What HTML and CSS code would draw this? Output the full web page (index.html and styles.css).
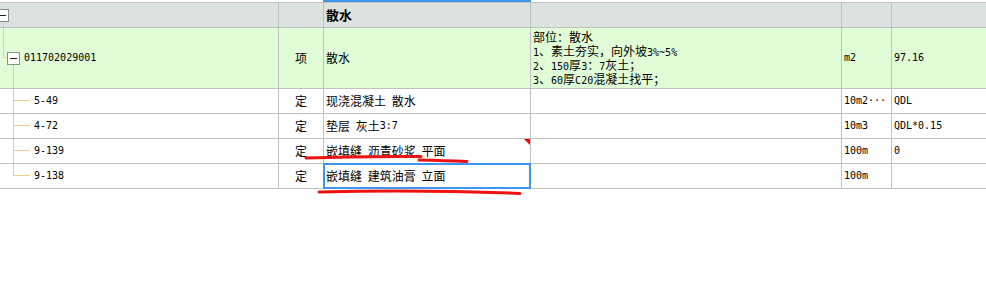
FILE: index.html
```html
<!DOCTYPE html>
<html lang="zh-CN">
<head>
<meta charset="utf-8">
<title>散水</title>
<link rel="stylesheet" href="styles.css">
</head>
<body>
<div class="grid">
  <div class="row head">
    <div class="cell tree t-head"><span class="toggle off-left"></span></div>
    <div class="cell"></div>
    <div class="cell name hdr">散水</div>
    <div class="cell"></div>
    <div class="cell"></div>
    <div class="cell"></div>
  </div>
  <div class="row bill">
    <div class="cell tree t-bill"><span class="toggle"></span><span class="a">011702029001</span></div>
    <div class="cell type">项</div>
    <div class="cell name">散水</div>
    <div class="cell desc">
      <div class="ln">部位：散水</div>
      <div class="ln"><span class="a">1</span>、素土夯实，向外坡<span class="a">3%~5%</span></div>
      <div class="ln"><span class="a">2</span>、<span class="a">150</span>厚<span class="a">3</span>：<span class="a">7</span>灰土；</div>
      <div class="ln"><span class="a">3</span>、<span class="a">60</span>厚<span class="a">C20</span>混凝土找平；</div>
    </div>
    <div class="cell unit"><span class="a">m2</span></div>
    <div class="cell qty"><span class="a">97.16</span></div>
  </div>
  <div class="row kid">
    <div class="cell tree t-kid"><span class="a">5-49</span></div>
    <div class="cell type">定</div>
    <div class="cell name">现浇混凝土 散水</div>
    <div class="cell"></div>
    <div class="cell unit"><span class="a">10m2···</span></div>
    <div class="cell qty"><span class="a">QDL</span></div>
  </div>
  <div class="row kid">
    <div class="cell tree t-kid"><span class="a">4-72</span></div>
    <div class="cell type">定</div>
    <div class="cell name">垫层 灰土<span class="a">3:7</span></div>
    <div class="cell"></div>
    <div class="cell unit"><span class="a">10m3</span></div>
    <div class="cell qty"><span class="a">QDL*0.15</span></div>
  </div>
  <div class="row kid">
    <div class="cell tree t-kid"><span class="a">9-139</span></div>
    <div class="cell type">定</div>
    <div class="cell name flag">嵌填缝 沥青砂浆 平面</div>
    <div class="cell"></div>
    <div class="cell unit"><span class="a">100m</span></div>
    <div class="cell qty"><span class="a">0</span></div>
  </div>
  <div class="row kid">
    <div class="cell tree t-kid t-last"><span class="a">9-138</span></div>
    <div class="cell type">定</div>
    <div class="cell name sel">嵌填缝 建筑油膏 立面</div>
    <div class="cell"></div>
    <div class="cell unit"><span class="a">100m</span></div>
    <div class="cell qty"></div>
  </div>
</div>
<svg class="marks" width="986" height="295" viewBox="0 0 986 295" aria-hidden="true">
  <path d="M306 158 Q 360 156 421 156.5" />
  <path d="M419 160 Q 445 160.5 467 161.5" />
  <path d="M319 192 Q 420 189.5 520 193.5" />
</svg>
</body>
</html>
```
FILE: styles.css
```css
html, body {
  margin: 0;
  padding: 0;
  background: #ffffff;
}
body {
  padding-top: 2px;
  position: relative;
  font-family: "Noto Sans CJK SC", "Noto Sans", sans-serif;
  font-size: 12px;
  color: #000000;
  height: 293px;
  overflow: hidden;
}
.grid {
  display: flex;
  flex-direction: column;
  gap: 1px;
  padding: 1px 0;
  background: #c0c0c0;
  width: 986px;
}
.row {
  display: grid;
  grid-template-columns: 278px 44px 206px 310px 49px 1fr;
  column-gap: 1px;
}
.head { height: 24px; }
.bill { height: 60px; }
.kid { height: 24px; }
.head .cell { background: #dce3df; }
.bill .cell { background: #e1fdd7; }
.kid .cell { background: #ffffff; }

.cell {
  display: flex;
  align-items: center;
  line-height: 14px;
  white-space: nowrap;
  overflow: hidden;
  word-spacing: 3px;
  min-width: 0;
}
.a {
  font-family: "DejaVu Sans Mono", "Liberation Mono", monospace;
  font-size: 10px;
  line-height: 10px;
  word-spacing: 0;
}
.type { justify-content: center; }
.name { padding-left: 2px; position: relative; overflow: visible; }
.hdr { font-weight: bold; font-size: 13px; }
.hdr::before {
  content: "";
  position: absolute;
  top: -3px;
  left: -1px;
  right: -1px;
  height: 2px;
  background: #3d95f5;
}
.desc {
  flex-direction: column;
  align-items: flex-start;
  justify-content: center;
  padding-left: 2px;
}
.ln {
  height: 14px;
  line-height: 14px;
  display: flex;
  align-items: baseline;
  white-space: nowrap;
}
.unit, .qty { padding-left: 2px; }

.flag::after {
  content: "";
  position: absolute;
  top: 0;
  right: 0;
  width: 0;
  height: 0;
  border-top: 6px solid #f00000;
  border-left: 6px solid transparent;
}
.sel {
  outline: 2px solid #3d95f5;
  outline-offset: -1px;
}

/* tree column */
.toggle {
  flex: none;
  width: 13px;
  height: 13px;
  box-sizing: border-box;
  border: 1px solid #8c8c8c;
  background: #ffffff;
  display: flex;
  align-items: center;
  justify-content: center;
}
.toggle::before {
  content: "";
  width: 7px;
  height: 1px;
  background: #202020;
}
.off-left { margin-left: -4px; }
.kid .t-kid { padding-left: 34px; }
.head .t-head {
  background:
    linear-gradient(#f9c98a, #f9c98a) 3px 18px / 1px 6px no-repeat,
    #dce3df;
}
.bill .t-bill {
  padding-left: 7px;
  gap: 4px;
  background:
    linear-gradient(#f9c98a, #f9c98a) 3px 0 / 1px 30px no-repeat,
    linear-gradient(#f9c98a, #f9c98a) 3px 29px / 4px 1px no-repeat,
    linear-gradient(#f9c98a, #f9c98a) 13px 36px / 1px 24px no-repeat,
    #e1fdd7;
}
.kid .t-kid {
  background:
    linear-gradient(#f9c98a, #f9c98a) 13px 0 / 1px 100% no-repeat,
    linear-gradient(#f9c98a, #f9c98a) 13px 11px / 17px 1px no-repeat,
    #ffffff;
}
.kid .t-last {
  background:
    linear-gradient(#f9c98a, #f9c98a) 13px 0 / 1px 12px no-repeat,
    linear-gradient(#f9c98a, #f9c98a) 13px 11px / 17px 1px no-repeat,
    #ffffff;
}

.marks {
  position: absolute;
  top: 0;
  left: 0;
  pointer-events: none;
}
.marks path {
  fill: none;
  stroke: #ee1111;
  stroke-width: 3;
  stroke-linecap: round;
}
```
